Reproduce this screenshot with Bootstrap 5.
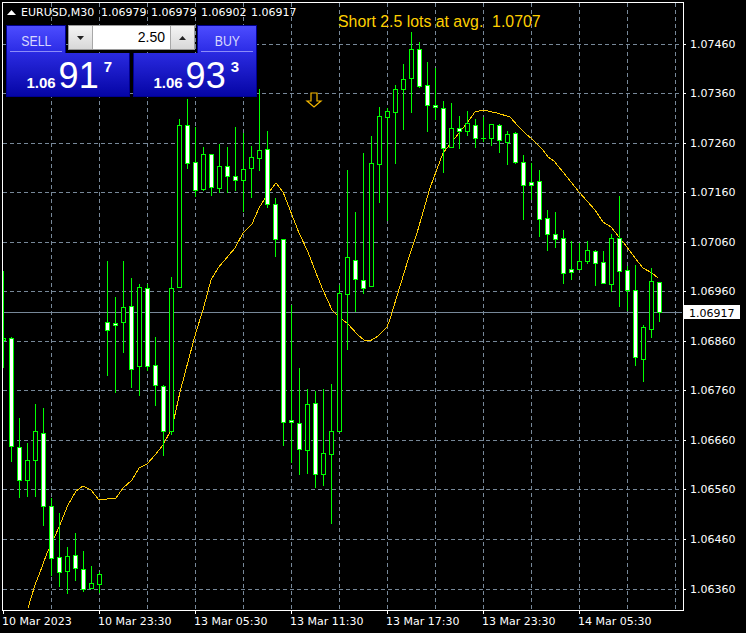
<!DOCTYPE html>
<html lang="en">
<head>
<meta charset="utf-8">
<title>EURUSD,M30</title>
<link href="https://cdn.jsdelivr.net/npm/bootstrap@5.3.0/dist/css/bootstrap.min.css" rel="stylesheet">
<style>
html,body{background:#000;margin:0;height:100%;overflow:hidden}
.mt-stage{position:relative;width:746px;height:633px;background:#000;overflow:hidden}
.mt-chart{position:absolute;left:0;top:0;display:block}
.mt-chart text{font-family:"DejaVu Sans",sans-serif;font-size:11px;fill:#fff}
.mt-chart text.mt-dark{fill:#000}
.mt-chart text.mt-note{font-family:"Liberation Sans",sans-serif;font-size:15.85px;fill:#ffd000}
.mt-panel{position:absolute;left:6px;top:25px;width:251px;font-family:"Liberation Sans",sans-serif;color:#fff}
.mt-top{height:28px}
.mt-bottom{height:44px}
.mt-action{width:60px;height:28px;background:linear-gradient(#4c4cff,#2a2ae4);border:1px solid #000090;border-bottom:0;color:#d8d8ff;font-size:15px;line-height:1;padding:0 3px}
.mt-action span{display:block;height:26px;padding-top:7px;border-bottom:1px solid #8c8cf8;text-align:center}
.mt-action b{display:inline-block;font-weight:400;transform:scaleX(.82)}
.mt-spin{width:127px;height:25px;margin:0 2px;background:#fff;border:1px solid #9a9a9a;color:#000;font-size:14px;line-height:1}
.mt-arrow{width:24px;background:linear-gradient(#f4f4f4,#d8d8d8);border:0}
.mt-arrow:first-child{border-right:1px solid #a8a8a8}
.mt-arrow:last-child{border-left:1px solid #a8a8a8}
.mt-value{padding:1px 5px 0 0;text-align:right}
.mt-quote{width:124px;background:linear-gradient(#2a2ae0,#0505a5);border:1px solid #000090;border-top:0;padding:4.5px 17px 0 0}
.mt-head{font-size:15px;font-weight:700;line-height:1}
.mt-big{font-size:36px;line-height:1;margin:0 4px 0 3px}
.mt-pip{font-size:15px;font-weight:700;line-height:1;align-self:flex-start;margin-top:1px;margin-left:1px}
</style>
</head>
<body>
<div class="mt-stage">
  <svg class="mt-chart" id="chart" width="746" height="633" viewBox="0 0 746 633" xmlns="http://www.w3.org/2000/svg">
    <g id="grid" shape-rendering="crispEdges"></g>
    <polyline id="ma" fill="none" stroke="#ffcc00" stroke-width="1" shape-rendering="crispEdges"></polyline>
    <g id="candles" shape-rendering="crispEdges"></g>
    <path d="M311 93h6v8h4l-7 6-7-6h4z" fill="#000" stroke="#f5b800" stroke-width="1.2"/>
    <rect x="2" y="2" width="681" height="608" fill="none" stroke="#fff" stroke-width="1" shape-rendering="crispEdges" transform="translate(.5 .5)"/>
    <g id="ticks" shape-rendering="crispEdges"></g>
    <path d="M7 15l4.500-5 4.500 5z" fill="#fff"/>
    <text x="21" y="16">EURUSD,M30</text>
    <text x="101" y="16">1.06979</text>
    <text x="151" y="16">1.06979</text>
    <text x="201" y="16">1.06902</text>
    <text x="251" y="16">1.06917</text>
    <text class="mt-note" x="338" y="27" xml:space="preserve">Short 2.5 lots at avg.  1.0707</text>
    <g id="labels"></g>
    <rect x="684" y="305" width="56" height="14" fill="#fff" shape-rendering="crispEdges"/>
    <text class="mt-dark" x="689" y="317">1.06917</text>
  </svg>

  <div class="mt-panel">
    <div class="mt-top d-flex">
      <div class="mt-action"><span><b>SELL</b></span></div>
      <div class="mt-spin d-flex">
        <button type="button" class="mt-arrow d-flex align-items-center justify-content-center p-0" aria-label="Decrease"><svg width="7" height="4" viewBox="0 0 7 4"><path d="M0 0h7L3.500 4z" fill="#222"/></svg></button>
        <div class="mt-value flex-grow-1 pt-1">2.50</div>
        <button type="button" class="mt-arrow d-flex align-items-center justify-content-center p-0" aria-label="Increase"><svg width="7" height="4" viewBox="0 0 7 4"><path d="M0 4h7L3.500 0z" fill="#222"/></svg></button>
      </div>
      <div class="mt-action"><span><b>BUY</b></span></div>
    </div>
    <div class="mt-bottom d-flex justify-content-between">
      <div class="mt-quote d-flex align-items-baseline justify-content-end"><span class="mt-head">1.06</span><span class="mt-big">91</span><span class="mt-pip">7</span></div>
      <div class="mt-quote d-flex align-items-baseline justify-content-end"><span class="mt-head">1.06</span><span class="mt-big">93</span><span class="mt-pip">3</span></div>
    </div>
  </div>
</div>
<script>
// x, wickTop, bodyTop, bodyBottom, wickBottom, filled(1 = white body)
var data=[
[3,271,338,340,367,0],[11,337,338,446,461,1],[19,418,447,480,497,1],[27,443,460,480,496,0],[35,404,431,460,496,0],
[43,408,433,506,525,1],[51,498,506,558,575,1],[59,513,557,572,586,1],[67,547,556,571,593,0],[75,533,555,568,580,1],
[83,551,569,589,591,1],[91,566,583,588,588,0],[99,572,574,584,592,0],[107,261,322,330,375,1],[115,297,323,325,392,1],
[123,261,307,322,352,0],[131,278,306,369,387,1],[139,284,287,366,395,0],[147,284,288,366,370,1],[155,337,365,385,405,1],
[163,385,386,431,455,1],[171,277,288,431,434,0],[179,119,125,287,287,0],[187,99,125,163,168,1],[195,127,162,190,196,1],
[203,147,154,189,190,0],[211,154,154,187,195,1],[219,144,166,188,192,0],[227,147,166,176,192,1],[235,127,176,180,190,1],
[243,133,169,180,211,0],[251,146,157,168,197,0],[259,89,150,158,170,0],[267,131,149,204,207,1],[275,198,204,239,256,1],
[283,239,239,422,445,1],[291,305,420,422,462,1],[299,368,423,449,474,1],[307,389,404,450,473,0],[315,391,403,474,487,1],
[323,389,453,474,485,0],[331,384,431,454,523,0],[339,285,293,431,431,0],[347,170,257,294,349,0],[355,212,260,279,311,1],
[363,153,280,288,293,1],[371,136,163,286,286,0],[379,107,116,164,202,0],[387,108,111,117,220,0],[395,85,89,112,163,0],
[403,64,79,89,129,0],[411,32,49,78,112,0],[419,42,49,86,87,1],[427,62,85,105,131,1],[435,68,105,107,119,1],
[443,101,108,148,172,1],[451,103,128,147,147,0],[459,116,128,131,148,1],[467,111,123,131,135,0],[475,119,125,138,147,1],
[483,117,138,138,141,2],[491,124,124,138,145,0],[499,124,125,140,152,1],[507,131,134,142,164,0],[515,132,133,162,163,1],
[523,155,162,185,219,1],[531,163,182,185,199,1],[539,170,181,219,236,1],[547,210,218,234,250,1],[555,212,234,239,247,1],
[563,230,238,273,283,1],[571,241,269,272,279,1],[579,243,261,269,269,0],[587,241,250,261,263,0],[595,250,251,263,285,1],
[603,251,262,283,283,1],[611,234,238,284,291,0],[619,196,238,271,306,1],[627,266,270,290,310,1],[635,265,290,357,365,1],
[643,325,327,359,381,0],[651,268,281,329,337,0],[659,282,282,312,321,1]];
var ma=[[28,608],[35,585],[42,567],[47,553],[52,543],[59,527],[68,505],[76,491],[83,486],[91,490],[99,500],[116,498],[123,488],[132,480],[139,468],[147,464],[155,455],[163,445],[172,428],[180,392],[189,358],[196,332],[203,310],[211,280],[218,268],[235,248],[243,233],[252,224],[259,208],[267,195],[276,183],[283,192],[292,215],[299,233],[308,252],[316,273],[323,290],[332,310],[339,317],[347,323],[358,335],[364,340],[370,341],[378,336],[387,327],[390,319],[408,260],[417,233],[430,188],[443,153],[467,123],[475,112],[483,110],[497,113],[510,117],[518,126],[527,135],[531,138],[543,150],[548,157],[554,161],[563,172],[579,192],[595,210],[603,222],[611,227],[619,237],[627,247],[635,258],[643,268],[652,273],[658,278]];
var ys=[44,93,143,192,242,291,341,390,440,489,539,589];
var prices=["1.07460","1.07360","1.07260","1.07160","1.07060","1.06960","1.06860","1.06760","1.06660","1.06560","1.06460","1.06360"];
var tx=[[3,"10 Mar 2023"],[99,"10 Mar 23:30"],[195,"13 Mar 05:30"],[291,"13 Mar 11:30"],[387,"13 Mar 17:30"],[483,"13 Mar 23:30"],[579,"14 Mar 05:30"]];
var g="",c="",t="",l="",i;
var GRID='stroke="#778899" stroke-width="1" stroke-dasharray="4 3"';
for(i=0;i<ys.length;i++){
  g+='<line x1="3" x2="682" y1="'+(ys[i]+.5)+'" y2="'+(ys[i]+.5)+'" '+GRID+'/>';
  t+='<line x1="683" x2="686" y1="'+(ys[i]+.5)+'" y2="'+(ys[i]+.5)+'" stroke="#fff"/>';
  l+='<text x="690" y="'+(ys[i]+4)+'">'+prices[i]+'</text>';
}
for(i=51;i<682;i+=48){
  g+='<line x1="'+(i+.5)+'" x2="'+(i+.5)+'" y1="3" y2="609" '+GRID+'/>';
}
g+='<line x1="3" x2="682" y1="312.5" y2="312.5" stroke="#778899"/>';
for(i=0;i<tx.length;i++){
  t+='<line x1="'+(tx[i][0]+.5)+'" x2="'+(tx[i][0]+.5)+'" y1="610" y2="614" stroke="#fff"/>';
  l+='<text x="'+(tx[i][0]-1)+'" y="625">'+tx[i][1]+'</text>';
}
data.forEach(function(d){
  var x=d[0]+.5;
  c+='<line x1="'+x+'" x2="'+x+'" y1="'+d[1]+'" y2="'+(d[4]+1)+'" stroke="#00ff00"/>';
  if(d[5]===2){c+='<line x1="'+(x-2.5)+'" x2="'+(x+2.5)+'" y1="'+(d[2]+.5)+'" y2="'+(d[2]+.5)+'" stroke="#00ff00"/>';return;}
  var left=Math.max(d[0]-2,3);
  c+='<rect x="'+(left+.5)+'" y="'+(d[2]+.5)+'" width="'+(d[0]+2-left)+'" height="'+(d[3]-d[2])+'" fill="'+(d[5]?'#fff':'#000')+'" stroke="#00ff00"/>';
});
document.getElementById("grid").innerHTML=g;
document.getElementById("candles").innerHTML=c;
document.getElementById("ticks").innerHTML=t;
document.getElementById("labels").innerHTML=l;
document.getElementById("ma").setAttribute("points",ma.map(function(p){return p.join(",")}).join(" "));
</script>
<script src="https://cdn.jsdelivr.net/npm/bootstrap@5.3.0/dist/js/bootstrap.bundle.min.js"></script>
</body>
</html>
